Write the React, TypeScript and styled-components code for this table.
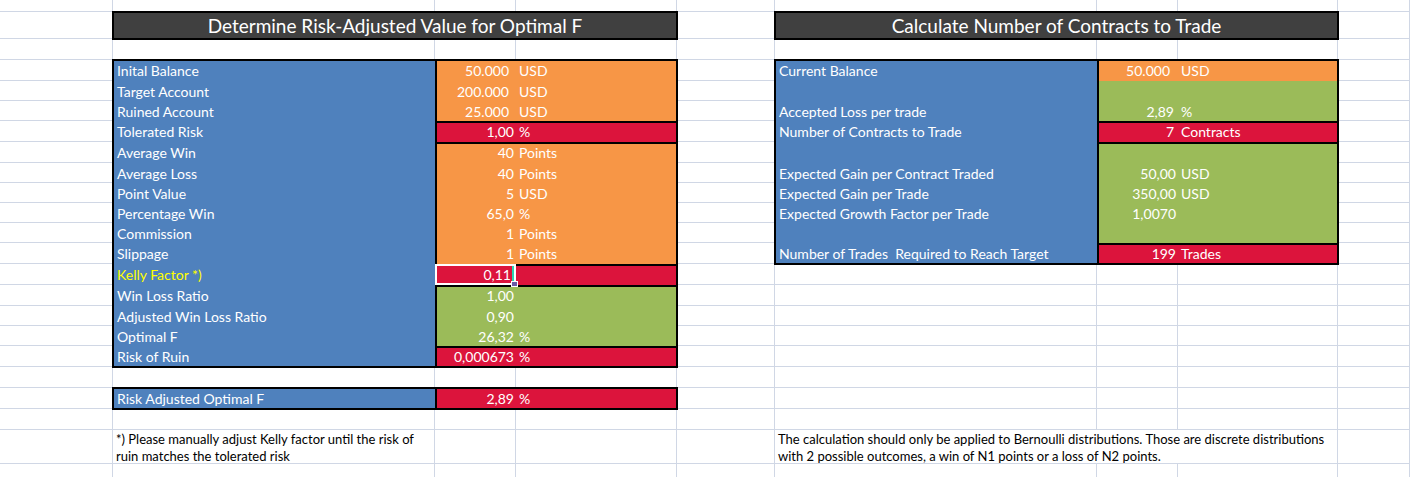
import React from 'react';
import styled, { createGlobalStyle } from 'styled-components';

const GRID_LINE = '#d0d7e5';
const BLUE = '#4f81bd';
const ORANGE = '#f79646';
const RED = '#dc143c';
const GREEN = '#9bbb59';

// column widths / row heights of the visible sheet area
const COLS = [113, 322, 81, 161, 98, 322, 81, 160];
const ROWS = [12, 27, 21, 21, 20, 20, 21, 21, 20, 20, 20, 20, 21, 21, 21, 20, 20, 21, 21, 21, 21, 34, 20];

const px = (list: number[]) => list.map((v) => v + 'px').join(' ');

type Row = {
    label?: string;
    num?: string;
    unit?: string;
    pad?: number;
    accent?: boolean;
    selected?: boolean;
};

type Group = { from: number; to: number; bg: string; top: boolean };

const leftRows: Row[] = [
    { label: 'Inital Balance', num: '50.000', unit: 'USD', pad: 7 },
    { label: 'Target Account', num: '200.000', unit: 'USD', pad: 7 },
    { label: 'Ruined Account', num: '25.000', unit: 'USD', pad: 7 },
    { label: 'Tolerated Risk', num: '1,00', unit: '%' },
    { label: 'Average Win', num: '40', unit: 'Points' },
    { label: 'Average Loss', num: '40', unit: 'Points' },
    { label: 'Point Value', num: '5', unit: 'USD' },
    { label: 'Percentage Win', num: '65,0', unit: '%' },
    { label: 'Commission', num: '1', unit: 'Points' },
    { label: 'Slippage', num: '1', unit: 'Points' },
    { label: 'Kelly Factor *)', num: '0,11', pad: 5, accent: true, selected: true },
    { label: 'Win Loss Ratio', num: '1,00' },
    { label: 'Adjusted Win Loss Ratio', num: '0,90' },
    { label: 'Optimal F', num: '26,32', unit: '%' },
    { label: 'Risk of Ruin', num: '0,000673', unit: '%' },
];

const leftGroups: Group[] = [
    { from: 1, to: 4, bg: ORANGE, top: false },
    { from: 4, to: 5, bg: RED, top: true },
    { from: 5, to: 11, bg: ORANGE, top: true },
    { from: 11, to: 12, bg: RED, top: true },
    { from: 12, to: 15, bg: GREEN, top: true },
    { from: 15, to: 16, bg: RED, top: true },
];

const rightRows: Row[] = [
    { label: 'Current Balance', num: '50.000', unit: 'USD', pad: 8 },
    {},
    { label: 'Accepted Loss per trade', num: '2,89', unit: '%', pad: 4 },
    { label: 'Number of Contracts to Trade', num: '7', unit: 'Contracts', pad: 4 },
    {},
    { label: 'Expected Gain per Contract Traded', num: '50,00', unit: 'USD' },
    { label: 'Expected Gain per Trade', num: '350,00', unit: 'USD' },
    { label: 'Expected Growth Factor per Trade', num: '1,0070' },
    {},
    { label: 'Number of Trades  Required to Reach Target', num: '199', unit: 'Trades' },
];

const rightGroups: Group[] = [
    { from: 1, to: 2, bg: ORANGE, top: false },
    { from: 2, to: 4, bg: GREEN, top: false },
    { from: 4, to: 5, bg: RED, top: true },
    { from: 5, to: 10, bg: GREEN, top: true },
    { from: 10, to: 11, bg: RED, top: true },
];

const GlobalStyle = createGlobalStyle`
    html, body {
        margin: 0;
        padding: 0;
        background: #fff;
        overflow: hidden;
    }
    body {
        font-family: Lato, "Liberation Sans", Arial, sans-serif;
    }
`;

const Sheet = styled.div`
    display: grid;
    grid-template-columns: ${px(COLS)} 1fr;
    grid-template-rows: ${px(ROWS)};
    width: 100%;
    height: 477px;
    overflow: hidden;
`;

const Cell = styled.div<{ $row: number; $col: number }>`
    grid-row: ${(p) => p.$row};
    grid-column: ${(p) => p.$col};
    border-right: 1px solid ${GRID_LINE};
    border-bottom: 1px solid ${GRID_LINE};
`;

const TitleBar = styled.div<{ $area: string }>`
    grid-area: ${(p) => p.$area};
    display: flex;
    align-items: center;
    justify-content: center;
    background: #404040;
    outline: 2px solid #000;
    outline-offset: -1px;
    color: #fff;
    font-size: 19px;
    position: relative;
    z-index: 1;
`;

const Table = styled.div<{ $area: string; $cols: string; $rows: string }>`
    grid-area: ${(p) => p.$area};
    display: grid;
    grid-template-columns: ${(p) => p.$cols};
    grid-template-rows: ${(p) => p.$rows};
    outline: 2px solid #000;
    outline-offset: -1px;
    position: relative;
    z-index: 1;
    font-size: 14px;
    color: #fff;
`;

const LabelBand = styled.div`
    grid-column: 1;
    grid-row: 1 / -1;
    background: ${BLUE};
`;

const GroupBox = styled.div<{ $from: number; $to: number; $bg: string; $top: boolean }>`
    grid-column: 2 / 4;
    grid-row: ${(p) => p.$from} / ${(p) => p.$to};
    background: ${(p) => p.$bg};
    box-shadow: inset 2px 0 #000${(p) => (p.$top ? ', inset 0 2px #000' : '')};
`;

const Label = styled.div<{ $row: number; $accent?: boolean }>`
    grid-column: 1;
    grid-row: ${(p) => p.$row};
    display: flex;
    align-items: center;
    padding-left: 4px;
    white-space: pre;
    color: ${(p) => (p.$accent ? '#ffff00' : '#fff')};
`;

const Value = styled.div<{ $row: number; $numWidth: number }>`
    grid-column: 2 / 4;
    grid-row: ${(p) => p.$row};
    display: grid;
    grid-template-columns: ${(p) => p.$numWidth}px 1fr;
    align-items: center;
    white-space: pre;
`;

const Num = styled.span<{ $pad: number }>`
    text-align: right;
    padding-right: ${(p) => p.$pad}px;
`;

const Unit = styled.span`
    padding-left: 3px;
`;

const Selection = styled.div<{ $row: number }>`
    grid-column: 2 / 3;
    grid-row: ${(p) => p.$row};
    position: relative;
    border: 2px solid #fff;
    box-shadow: inset -2px 0 #2bd6b1;

    &::after {
        content: '';
        position: absolute;
        right: -4px;
        bottom: -4px;
        width: 5px;
        height: 4px;
        background: #6b5aa6;
        border: 1px solid #fff;
    }
`;

const Note = styled.div<{ $area: string; $cover?: boolean }>`
    grid-area: ${(p) => p.$area};
    padding: 1px 3px 0;
    font-size: 13px;
    line-height: 17px;
    color: #000;
    background: ${(p) => (p.$cover ? '#fff' : 'transparent')};
    border-right: 1px solid ${GRID_LINE};
    border-bottom: 1px solid ${GRID_LINE};
    position: relative;
    z-index: 1;
`;

function DataTable({ area, cols, rows, data, groups }: {
    area: string;
    cols: number[];
    rows: number[];
    data: Row[];
    groups: Group[];
}) {
    return (
        <Table $area={area} $cols={px(cols)} $rows={px(rows)}>
            <LabelBand />
            {groups.map((g) => (
                <GroupBox key={g.from} $from={g.from} $to={g.to} $bg={g.bg} $top={g.top} />
            ))}
            {data.map((r, i) =>
                r.label ? (
                    <Label key={'l' + i} $row={i + 1} $accent={r.accent}>
                        {r.label}
                    </Label>
                ) : null
            )}
            {data.map((r, i) =>
                r.num ? (
                    <Value key={'v' + i} $row={i + 1} $numWidth={cols[1]}>
                        <Num $pad={r.pad ?? 2}>{r.num}</Num>
                        {r.unit ? <Unit>{r.unit}</Unit> : <span />}
                    </Value>
                ) : null
            )}
            {data.map((r, i) => (r.selected ? <Selection key={'s' + i} $row={i + 1} /> : null))}
        </Table>
    );
}

export default function App() {
    const cells = [];
    for (let r = 1; r <= ROWS.length; r++) {
        for (let c = 1; c <= COLS.length + 1; c++) {
            cells.push(<Cell key={r + '-' + c} $row={r} $col={c} />);
        }
    }

    return (
        <>
            <GlobalStyle />
            <Sheet>
                {cells}

                <TitleBar $area="2 / 2 / 3 / 5">Determine Risk-Adjusted Value for Optimal F</TitleBar>
                <TitleBar $area="2 / 6 / 3 / 9">Calculate Number of Contracts to Trade</TitleBar>

                <DataTable
                    area="4 / 2 / 19 / 5"
                    cols={[322, 81, 161]}
                    rows={ROWS.slice(3, 18)}
                    data={leftRows}
                    groups={leftGroups}
                />
                <DataTable
                    area="4 / 6 / 14 / 9"
                    cols={[322, 81, 160]}
                    rows={ROWS.slice(3, 13)}
                    data={rightRows}
                    groups={rightGroups}
                />
                <DataTable
                    area="20 / 2 / 21 / 5"
                    cols={[322, 81, 161]}
                    rows={[ROWS[19]]}
                    data={[{ label: 'Risk Adjusted Optimal F', num: '2,89', unit: '%' }]}
                    groups={[{ from: 1, to: 2, bg: RED, top: false }]}
                />

                <Note $area="22 / 2 / 23 / 3">
                    *) Please manually adjust Kelly factor until the risk of
                    <br />
                    ruin matches the tolerated risk
                </Note>
                <Note $area="22 / 6 / 23 / 9" $cover>
                    The calculation should only be applied to Bernoulli distributions. Those are discrete distributions
                    <br />
                    with 2 possible outcomes, a win of N1 points or a loss of N2 points.
                </Note>
            </Sheet>
        </>
    );
}
